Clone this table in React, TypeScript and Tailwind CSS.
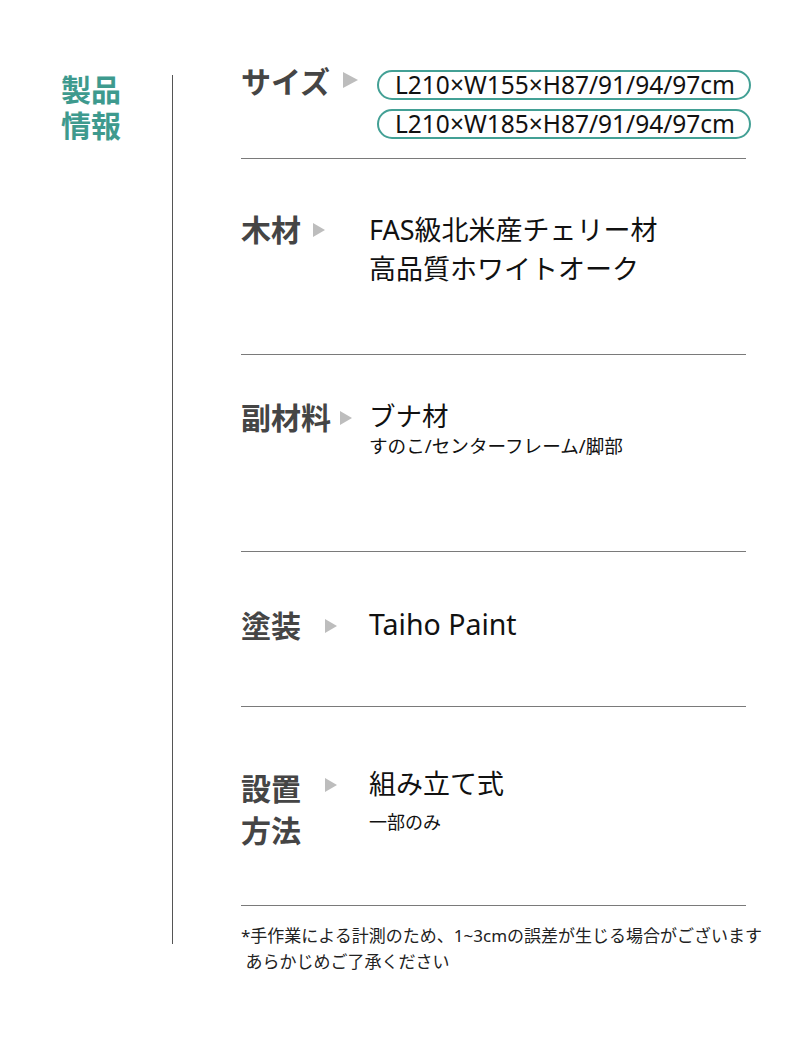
import React from "react";

const CJK = { fontFamily: '"Noto Sans", "Noto Sans CJK JP", sans-serif' };
const BOLD = { fontFamily: '"Noto Sans CJK JP", sans-serif' };

function Tri({ big }: { big?: boolean }) {
  return big ? (
    <svg width="15" height="16" viewBox="0 0 15 16" className="block">
      <polygon points="0,0 15,8 0,16" fill="#bdbdbd" />
    </svg>
  ) : (
    <svg width="12" height="14" viewBox="0 0 12 14" className="block">
      <polygon points="0,0 12,7 0,14" fill="#bdbdbd" />
    </svg>
  );
}

function Divider() {
  return <div className="h-px w-[505px] bg-[#7a7a7a]" />;
}

export default function App() {
  return (
    <div
      className="relative flex h-[1060px] w-[790px] items-start bg-white text-[#111]"
      style={CJK}
    >
      {/* left column */}
      <div className="mt-[75px] h-[869px] w-[173px] shrink-0 border-r border-[#555]">
        <div
          className="-mt-[5px] pl-[61px] text-[30px] font-bold leading-[36px] text-[#3e9a8e]"
          style={BOLD}
        >
          <div>製品</div>
          <div>情報</div>
        </div>
      </div>

      {/* right column */}
      <div className="flex flex-col pl-[68px] pt-[62px]">
        {/* size */}
        <div className="flex items-start">
          <div className="flex w-[136px] shrink-0 items-start">
            <span className="text-[30px] font-bold leading-[36px] text-[#454545]" style={BOLD}>
              サイズ
            </span>
            <span className="ml-[13px] mt-[10px]">
              <Tri big />
            </span>
          </div>
          <div className="mt-[8px] flex flex-col gap-[9px]">
            {["L210×W155×H87/91/94/97cm", "L210×W185×H87/91/94/97cm"].map((t) => (
              <div
                key={t}
                className="flex h-[30px] w-[374px] items-center rounded-full border-2 border-[#43a095] pl-[16px] text-[24.5px] leading-none text-[#111]"
              >
                {t}
              </div>
            ))}
          </div>
        </div>
        <div className="mt-[19px]">
          <Divider />
        </div>

        {/* wood */}
        <div className="flex items-start pb-[66px] pt-[51px]">
          <div className="flex w-[128px] shrink-0 items-start">
            <span className="text-[30px] font-bold leading-[36px] text-[#454545]" style={BOLD}>
              木材
            </span>
            <span className="ml-[12px] mt-[13px]">
              <Tri />
            </span>
          </div>
          <div className="text-[27px] leading-[39px]">
            <div>FAS級北米産チェリー材</div>
            <div>高品質ホワイトオーク</div>
          </div>
        </div>
        <Divider />

        {/* sub material */}
        <div className="flex items-start pb-[93px] pt-[43px]">
          <div className="flex w-[128px] shrink-0 items-start">
            <span className="text-[30px] font-bold leading-[36px] text-[#454545]" style={BOLD}>
              副材料
            </span>
            <span className="ml-[9px] mt-[13px]">
              <Tri />
            </span>
          </div>
          <div>
            <div className="text-[26.5px] leading-[36px]">ブナ材</div>
            <div className="text-[18.6px] leading-[24px]">すのこ/センターフレーム/脚部</div>
          </div>
        </div>
        <Divider />

        {/* paint */}
        <div className="flex items-start pb-[64px] pt-[54px]">
          <div className="flex w-[128px] shrink-0 items-start">
            <span className="text-[30px] font-bold leading-[36px] text-[#454545]" style={BOLD}>
              塗装
            </span>
            <span className="ml-[24px] mt-[13px]">
              <Tri />
            </span>
          </div>
          <div className="text-[28.5px] leading-[36px]">Taiho Paint</div>
        </div>
        <Divider />

        {/* install */}
        <div className="flex items-start pb-[55px] pt-[59px]">
          <div className="flex w-[128px] shrink-0 items-start">
            <span className="text-[30px] font-bold leading-[42px] text-[#454545]" style={BOLD}>
              設置
              <br />
              方法
            </span>
            <span className="ml-[24px] mt-[12px]">
              <Tri />
            </span>
          </div>
          <div>
            <div className="text-[27px] leading-[36px]">組み立て式</div>
            <div className="mt-[8px] text-[18px] leading-[24px]">一部のみ</div>
          </div>
        </div>
        <Divider />

        {/* note */}
        <div className="pt-[17px] text-[17px] leading-[26px] text-[#222]">
          <div>*手作業による計測のため、1~3cmの誤差が生じる場合がございます</div>
          <div>&nbsp;あらかじめご了承ください</div>
        </div>
      </div>
    </div>
  );
}
